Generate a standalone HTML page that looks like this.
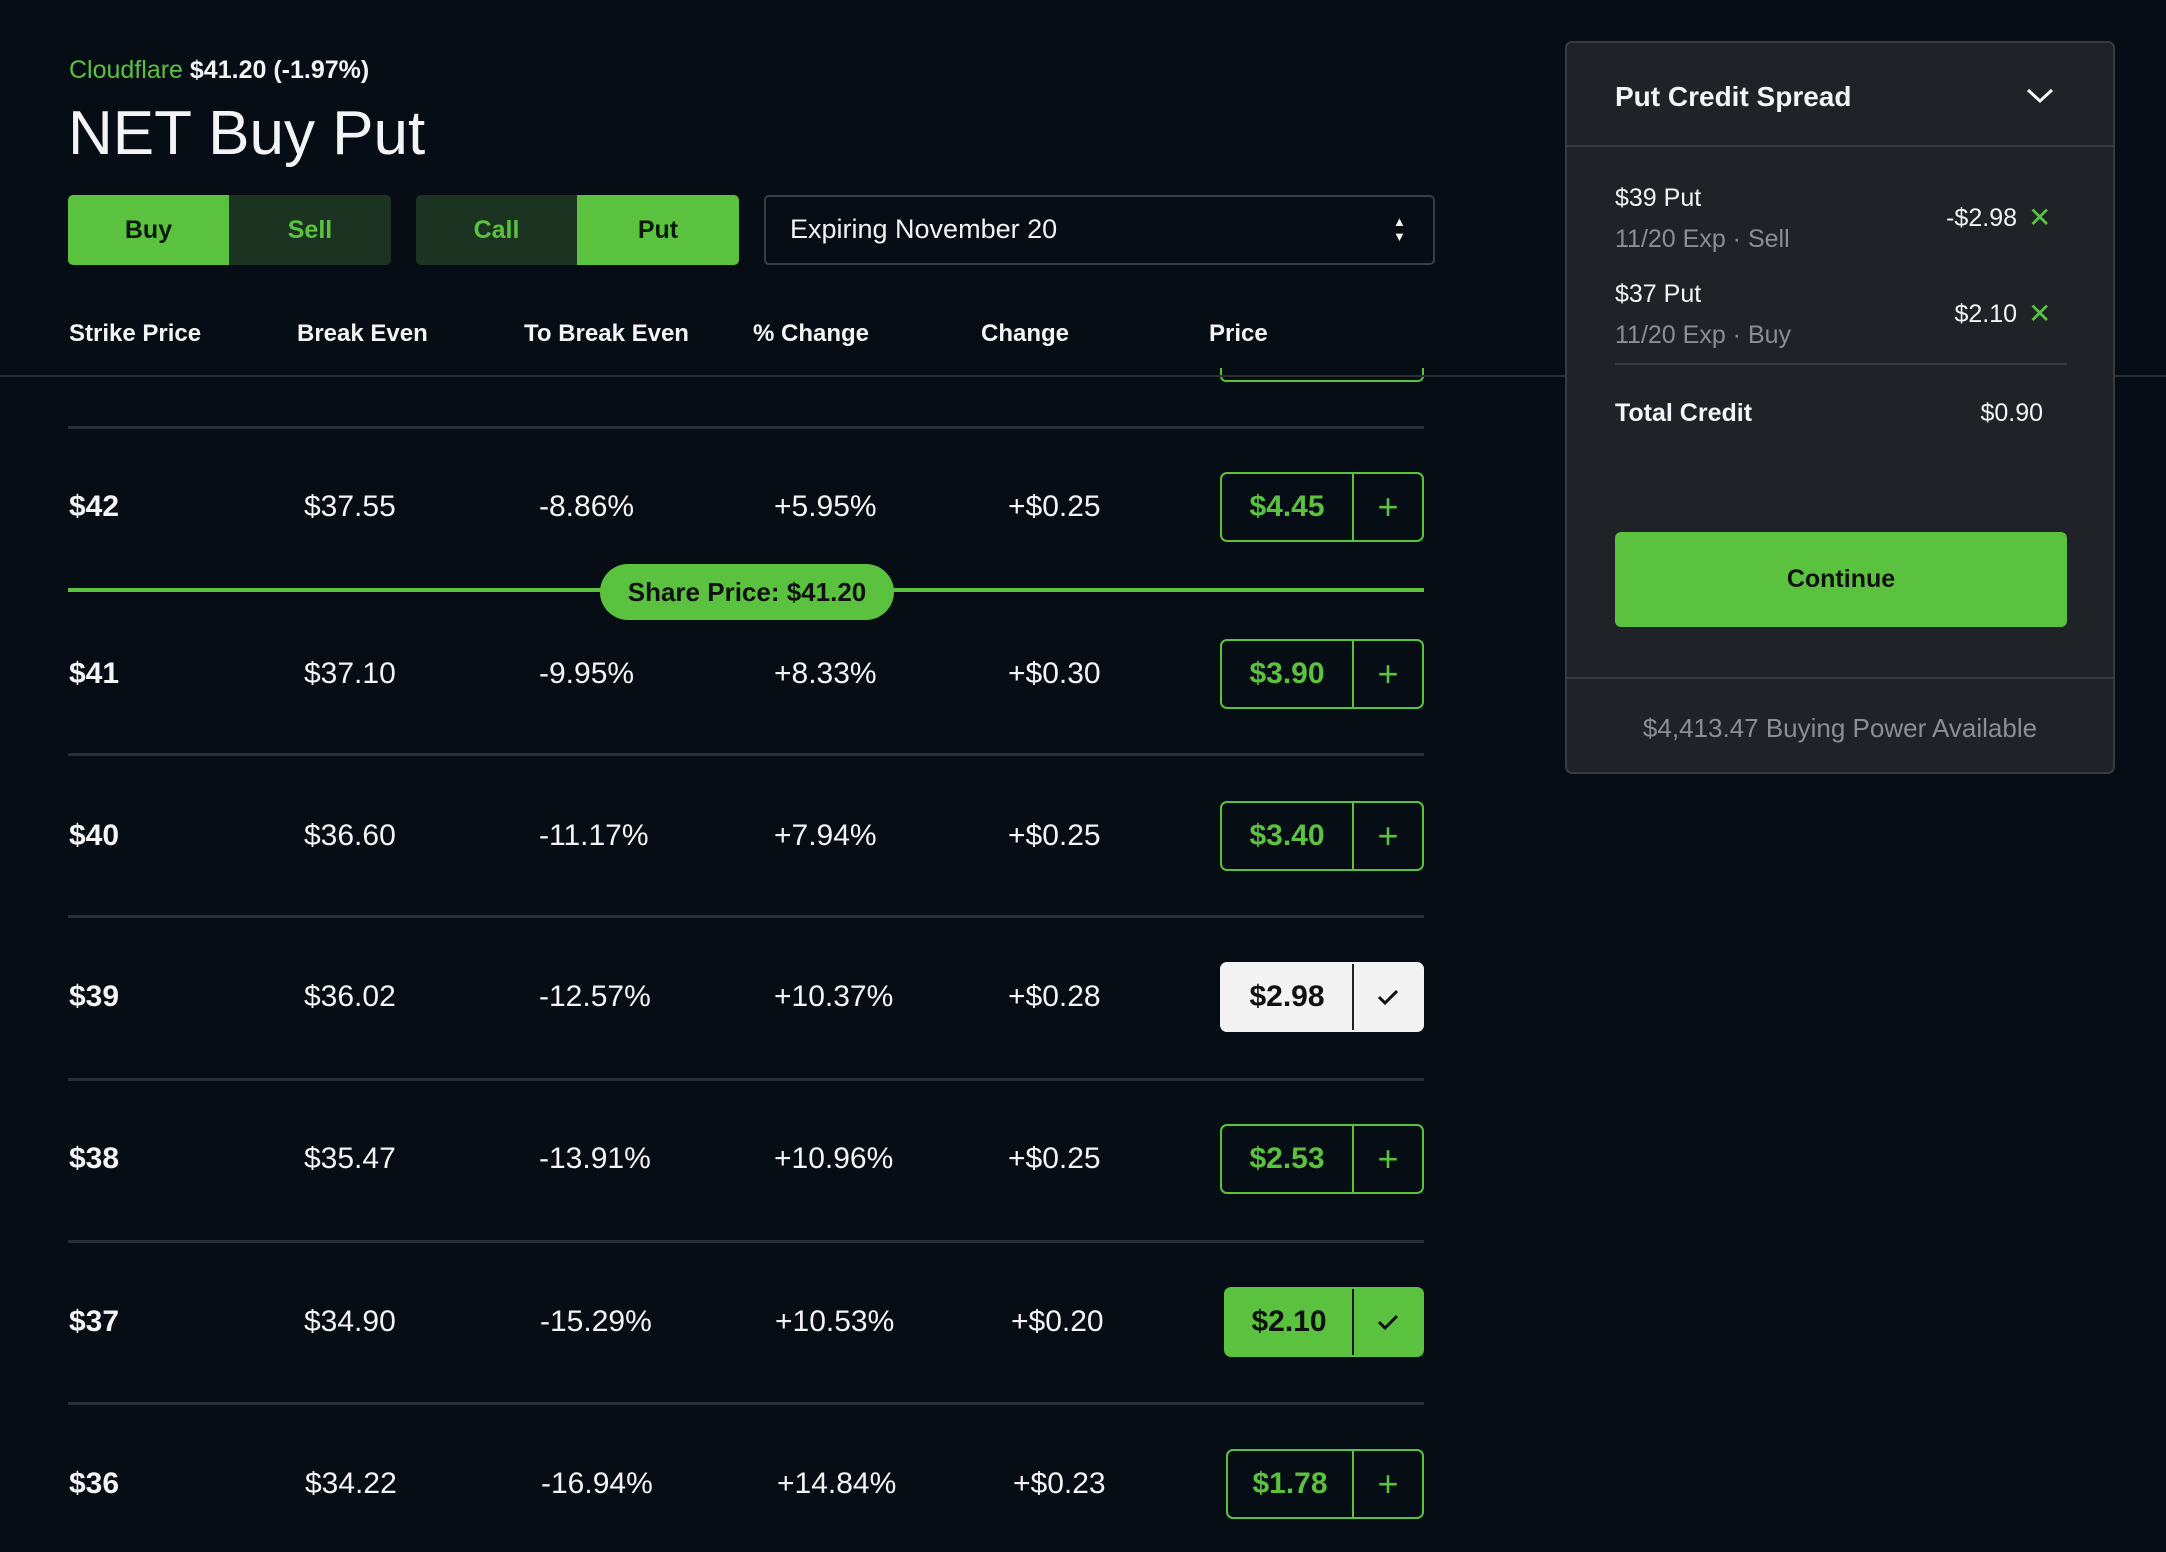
<!DOCTYPE html>
<html><head><meta charset="utf-8"><style>
*{margin:0;padding:0;box-sizing:border-box}
body{width:2166px;height:1552px;background:#070d14;font-family:"Liberation Sans",sans-serif;color:#f2f4f5;position:relative;overflow:hidden}
.a{position:absolute;white-space:nowrap}
.hdr{top:320px;font-size:24px;font-weight:bold}
.v{font-size:30px;transform:translateY(-50%)}
.b{font-weight:bold}
.line{position:absolute;left:68px;width:1356px;height:3px;background:#2b2f34}
.btn{position:absolute;left:1220px;width:204px;height:70px;border:2px solid #5bc23f;border-radius:7px;display:flex;transform:translateY(-50%)}
.btn .p{width:132px;border-right:2px solid #5bc23f;display:flex;align-items:center;justify-content:center;font-weight:bold;font-size:30px;color:#5bc23f}
.btn .s{flex:1;display:flex;align-items:center;justify-content:center;color:#5bc23f;font-size:36px}
.btn.w{background:#f3f3f4;border-color:#f3f3f4}
.btn.w .p{color:#111;border-right-color:#222}
.btn.g{background:#5bc23f}
.btn.g .p{color:#111;border-right-color:#111}
.seg{position:absolute;top:195px;height:70px;width:161px;display:flex;align-items:center;justify-content:center;font-size:25px;font-weight:bold}
</style></head><body>
<div class="a" style="left:69px;top:56px;font-size:25px"><span style="color:#5bc23f">Cloudflare</span> <b>$41.20 (-1.97%)</b></div>
<div class="a" style="left:68px;top:98px;font-size:62px">NET Buy Put</div>
<div class="seg" style="left:68px;background:#5bc23f;color:#0b1a0a;border-radius:5px 0 0 5px">Buy</div>
<div class="seg" style="left:229px;width:162px;background:#1b3320;color:#5bc23f;border-radius:0 5px 5px 0">Sell</div>
<div class="seg" style="left:416px;background:#1b3320;color:#5bc23f;border-radius:5px 0 0 5px">Call</div>
<div class="seg" style="left:577px;width:162px;background:#5bc23f;color:#0b1a0a;border-radius:0 5px 5px 0">Put</div>
<div class="a" style="left:764px;top:195px;width:671px;height:70px;border:2px solid #3a3e43;border-radius:5px"></div>
<div class="a" style="left:790px;top:214px;font-size:27px">Expiring November 20</div>
<div class="a" style="left:1393px;top:214px;font-size:13px;line-height:15px">▲<br>▼</div>

<div class="a hdr" style="left:69px">Strike Price</div>
<div class="a hdr" style="left:297px">Break Even</div>
<div class="a hdr" style="left:524px">To Break Even</div>
<div class="a hdr" style="left:753px">% Change</div>
<div class="a hdr" style="left:981px">Change</div>
<div class="a hdr" style="left:1209px">Price</div>
<div class="a" style="left:1220px;top:368px;width:204px;height:14px;border:2px solid #5bc23f;border-top:none;border-radius:0 0 6px 6px"></div>
<div class="a" style="left:0;top:375px;width:2166px;height:2px;background:#2b2f34"></div>

<div class="line" style="top:426px"></div>
<div class="line" style="top:753px"></div>
<div class="line" style="top:915px"></div>
<div class="line" style="top:1078px"></div>
<div class="line" style="top:1240px"></div>
<div class="line" style="top:1402px"></div>

<div class="a" style="left:68px;top:588px;width:1356px;height:4px;background:#5bc23f"></div>
<div class="a" style="left:600px;top:564px;width:294px;height:56px;border-radius:28px;background:#5bc23f;color:#111;font-weight:bold;font-size:26px;display:flex;align-items:center;justify-content:center">Share Price: $41.20</div>

<div class="a v b" style="left:69px;top:507px">$42</div><div class="a v" style="left:304px;top:507px">$37.55</div><div class="a v" style="left:539px;top:507px">-8.86%</div><div class="a v" style="left:774px;top:507px">+5.95%</div><div class="a v" style="left:1008px;top:507px">+$0.25</div>
<div class="btn" style="top:507px"><div class="p">$4.45</div><div class="s">+</div></div>

<div class="a v b" style="left:69px;top:674px">$41</div><div class="a v" style="left:304px;top:674px">$37.10</div><div class="a v" style="left:539px;top:674px">-9.95%</div><div class="a v" style="left:774px;top:674px">+8.33%</div><div class="a v" style="left:1008px;top:674px">+$0.30</div>
<div class="btn" style="top:674px"><div class="p">$3.90</div><div class="s">+</div></div>

<div class="a v b" style="left:69px;top:836px">$40</div><div class="a v" style="left:304px;top:836px">$36.60</div><div class="a v" style="left:539px;top:836px">-11.17%</div><div class="a v" style="left:774px;top:836px">+7.94%</div><div class="a v" style="left:1008px;top:836px">+$0.25</div>
<div class="btn" style="top:836px"><div class="p">$3.40</div><div class="s">+</div></div>

<div class="a v b" style="left:69px;top:997px">$39</div><div class="a v" style="left:304px;top:997px">$36.02</div><div class="a v" style="left:539px;top:997px">-12.57%</div><div class="a v" style="left:774px;top:997px">+10.37%</div><div class="a v" style="left:1008px;top:997px">+$0.28</div>
<div class="btn w" style="top:997px"><div class="p">$2.98</div><div class="s"><svg width="22" height="18" viewBox="0 0 22 18"><path d="M2 9 L8 15 L20 3" stroke="#111" stroke-width="3" fill="none"/></svg></div></div>

<div class="a v b" style="left:69px;top:1159px">$38</div><div class="a v" style="left:304px;top:1159px">$35.47</div><div class="a v" style="left:539px;top:1159px">-13.91%</div><div class="a v" style="left:774px;top:1159px">+10.96%</div><div class="a v" style="left:1008px;top:1159px">+$0.25</div>
<div class="btn" style="top:1159px"><div class="p">$2.53</div><div class="s">+</div></div>

<div class="a v b" style="left:69px;top:1322px">$37</div><div class="a v" style="left:304px;top:1322px">$34.90</div><div class="a v" style="left:540px;top:1322px">-15.29%</div><div class="a v" style="left:775px;top:1322px">+10.53%</div><div class="a v" style="left:1011px;top:1322px">+$0.20</div>
<div class="btn g" style="top:1322px;left:1224px;width:200px"><div class="p" style="width:128px">$2.10</div><div class="s"><svg width="22" height="18" viewBox="0 0 22 18"><path d="M2 9 L8 15 L20 3" stroke="#111" stroke-width="3" fill="none"/></svg></div></div>

<div class="a v b" style="left:69px;top:1484px">$36</div><div class="a v" style="left:305px;top:1484px">$34.22</div><div class="a v" style="left:541px;top:1484px">-16.94%</div><div class="a v" style="left:777px;top:1484px">+14.84%</div><div class="a v" style="left:1013px;top:1484px">+$0.23</div>
<div class="btn" style="top:1484px;left:1226px;width:198px"><div class="p" style="width:126px">$1.78</div><div class="s">+</div></div>

<div class="a" style="left:1565px;top:41px;width:550px;height:733px;background:#1f2227;border:2px solid #383c41;border-radius:7px">
  <div class="a" style="left:48px;top:38px;font-size:28px;font-weight:bold">Put Credit Spread</div>
  <svg class="a" style="left:458px;top:44px" width="30" height="18" viewBox="0 0 30 18"><path d="M3 3 L15 14 L27 3" stroke="#f2f4f5" stroke-width="3" fill="none"/></svg>
  <div class="a" style="left:0;top:102px;width:546px;height:2px;background:#383c41"></div>
  <div class="a" style="left:48px;top:141px;font-size:25px">$39 Put</div>
  <div class="a" style="left:48px;top:182px;font-size:25px;color:#8a8f95">11/20 Exp · Sell</div>
  <div class="a" style="right:96px;top:161px;font-size:25px">-$2.98</div>
  <div class="a" style="left:461px;top:158px;font-size:28px;color:#5bc23f">✕</div>
  <div class="a" style="left:48px;top:237px;font-size:25px">$37 Put</div>
  <div class="a" style="left:48px;top:278px;font-size:25px;color:#8a8f95">11/20 Exp · Buy</div>
  <div class="a" style="right:96px;top:257px;font-size:25px">$2.10</div>
  <div class="a" style="left:461px;top:254px;font-size:28px;color:#5bc23f">✕</div>
  <div class="a" style="left:48px;top:320px;width:452px;height:2px;background:#383c41"></div>
  <div class="a" style="left:48px;top:356px;font-size:25px;font-weight:bold">Total Credit</div>
  <div class="a" style="right:70px;top:356px;font-size:25px">$0.90</div>
  <div class="a" style="left:48px;top:489px;width:452px;height:95px;background:#5bc23f;border-radius:6px;color:#111;font-weight:bold;font-size:25px;display:flex;align-items:center;justify-content:center">Continue</div>
  <div class="a" style="left:0;top:634px;width:546px;height:2px;background:#383c41"></div>
  <div class="a" style="left:0;width:546px;top:670px;font-size:26px;color:#8a8f95;text-align:center">$4,413.47 Buying Power Available</div>
</div>
</body></html>
